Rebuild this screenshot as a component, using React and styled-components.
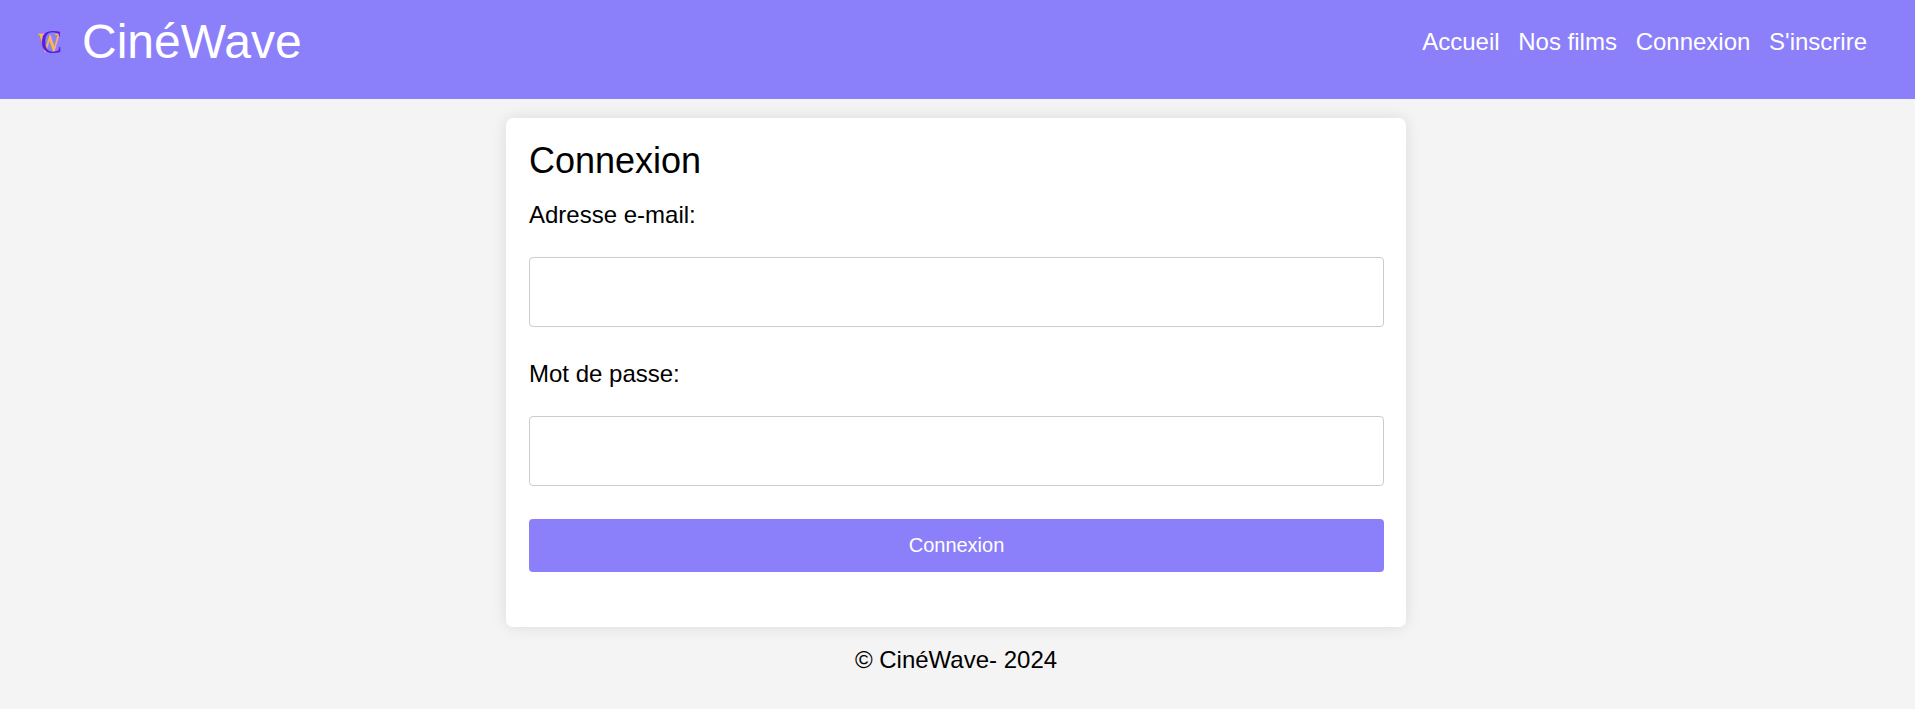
import React from "react";
import styled, { createGlobalStyle } from "styled-components";

const GlobalStyle = createGlobalStyle`
  *, *::before, *::after { box-sizing: border-box; }
  body {
    margin: 0;
    background: #f4f4f4;
    color: #000;
    font-family: Arial, "Liberation Sans", sans-serif;
    font-size: 24px;
    line-height: 28px;
  }
`;

const Header = styled.header`
  display: flex;
  justify-content: space-between;
  align-items: flex-start;
  height: 99px;
  padding: 14px 48px 0 30px;
  background: #8c80fa;
  color: #fff;
`;

const Brand = styled.div`
  display: flex;
  align-items: center;
  gap: 12px;
`;

const Logo = styled.svg`
  display: block;
  width: 40px;
  height: 54px;
  overflow: visible;
  font-family: "Liberation Serif", serif;
`;

const BrandName = styled.h1`
  margin: 0;
  padding-top: 1px;
  font-size: 48px;
  font-weight: 400;
  line-height: 54px;
`;

const Nav = styled.nav`
  display: flex;
  gap: 18.7px;
  padding-top: 14px;
`;

const NavLink = styled.a`
  color: #fff;
  text-decoration: none;
`;

const Card = styled.main`
  width: 900px;
  height: 509px;
  margin: 19px 0 0 506px;
  padding: 22px 22px 0 23px;
  border-radius: 7px;
  background: #fff;
  box-shadow: 0 0 15px rgba(0, 0, 0, 0.1);
`;

const Title = styled.h2`
  margin: 0;
  font-size: 36px;
  font-weight: 400;
  line-height: 42px;
`;

const Form = styled.form`
  display: flex;
  flex-direction: column;
  padding-top: 19px;
`;

const Label = styled.label`
  margin-bottom: 28px;
`;

const Input = styled.input`
  width: 100%;
  height: 70px;
  margin: 0 0 33px;
  padding: 15px;
  border: 1px solid #ccc;
  border-radius: 4px;
  background: #fff;
  font: inherit;
`;

const SubmitButton = styled.button`
  height: 53px;
  padding: 0;
  border: 0;
  border-radius: 4px;
  background: #8c80fa;
  color: #fff;
  font-family: inherit;
  font-size: 20px;
`;

const Footer = styled.footer`
  padding: 19px 3px 0 0;
  text-align: center;
`;

const links = ["Accueil", "Nos films", "Connexion", "S'inscrire"];

export default function App() {
  return (
    <>
      <GlobalStyle />
      <Header>
        <Brand>
          <Logo viewBox="0 0 40 54" aria-hidden="true">
            <text transform="translate(8.3 37) scale(0.86 1)" fontSize="27" fill="#fcba45" stroke="#fcba45" strokeWidth="0.4">W</text>
            <text transform="translate(10.6 37.6) scale(0.98 1)" fontSize="33" fill="#591bdf">C</text>
          </Logo>
          <BrandName>CinéWave</BrandName>
        </Brand>
        <Nav>
          {links.map((link) => (
            <NavLink key={link} href="#">{link}</NavLink>
          ))}
        </Nav>
      </Header>
      <Card>
        <Title>Connexion</Title>
        <Form>
          <Label htmlFor="email">Adresse e-mail:</Label>
          <Input id="email" type="email" />
          <Label htmlFor="password">Mot de passe:</Label>
          <Input id="password" type="password" />
          <SubmitButton type="button">Connexion</SubmitButton>
        </Form>
      </Card>
      <Footer>© CinéWave- 2024</Footer>
    </>
  );
}
